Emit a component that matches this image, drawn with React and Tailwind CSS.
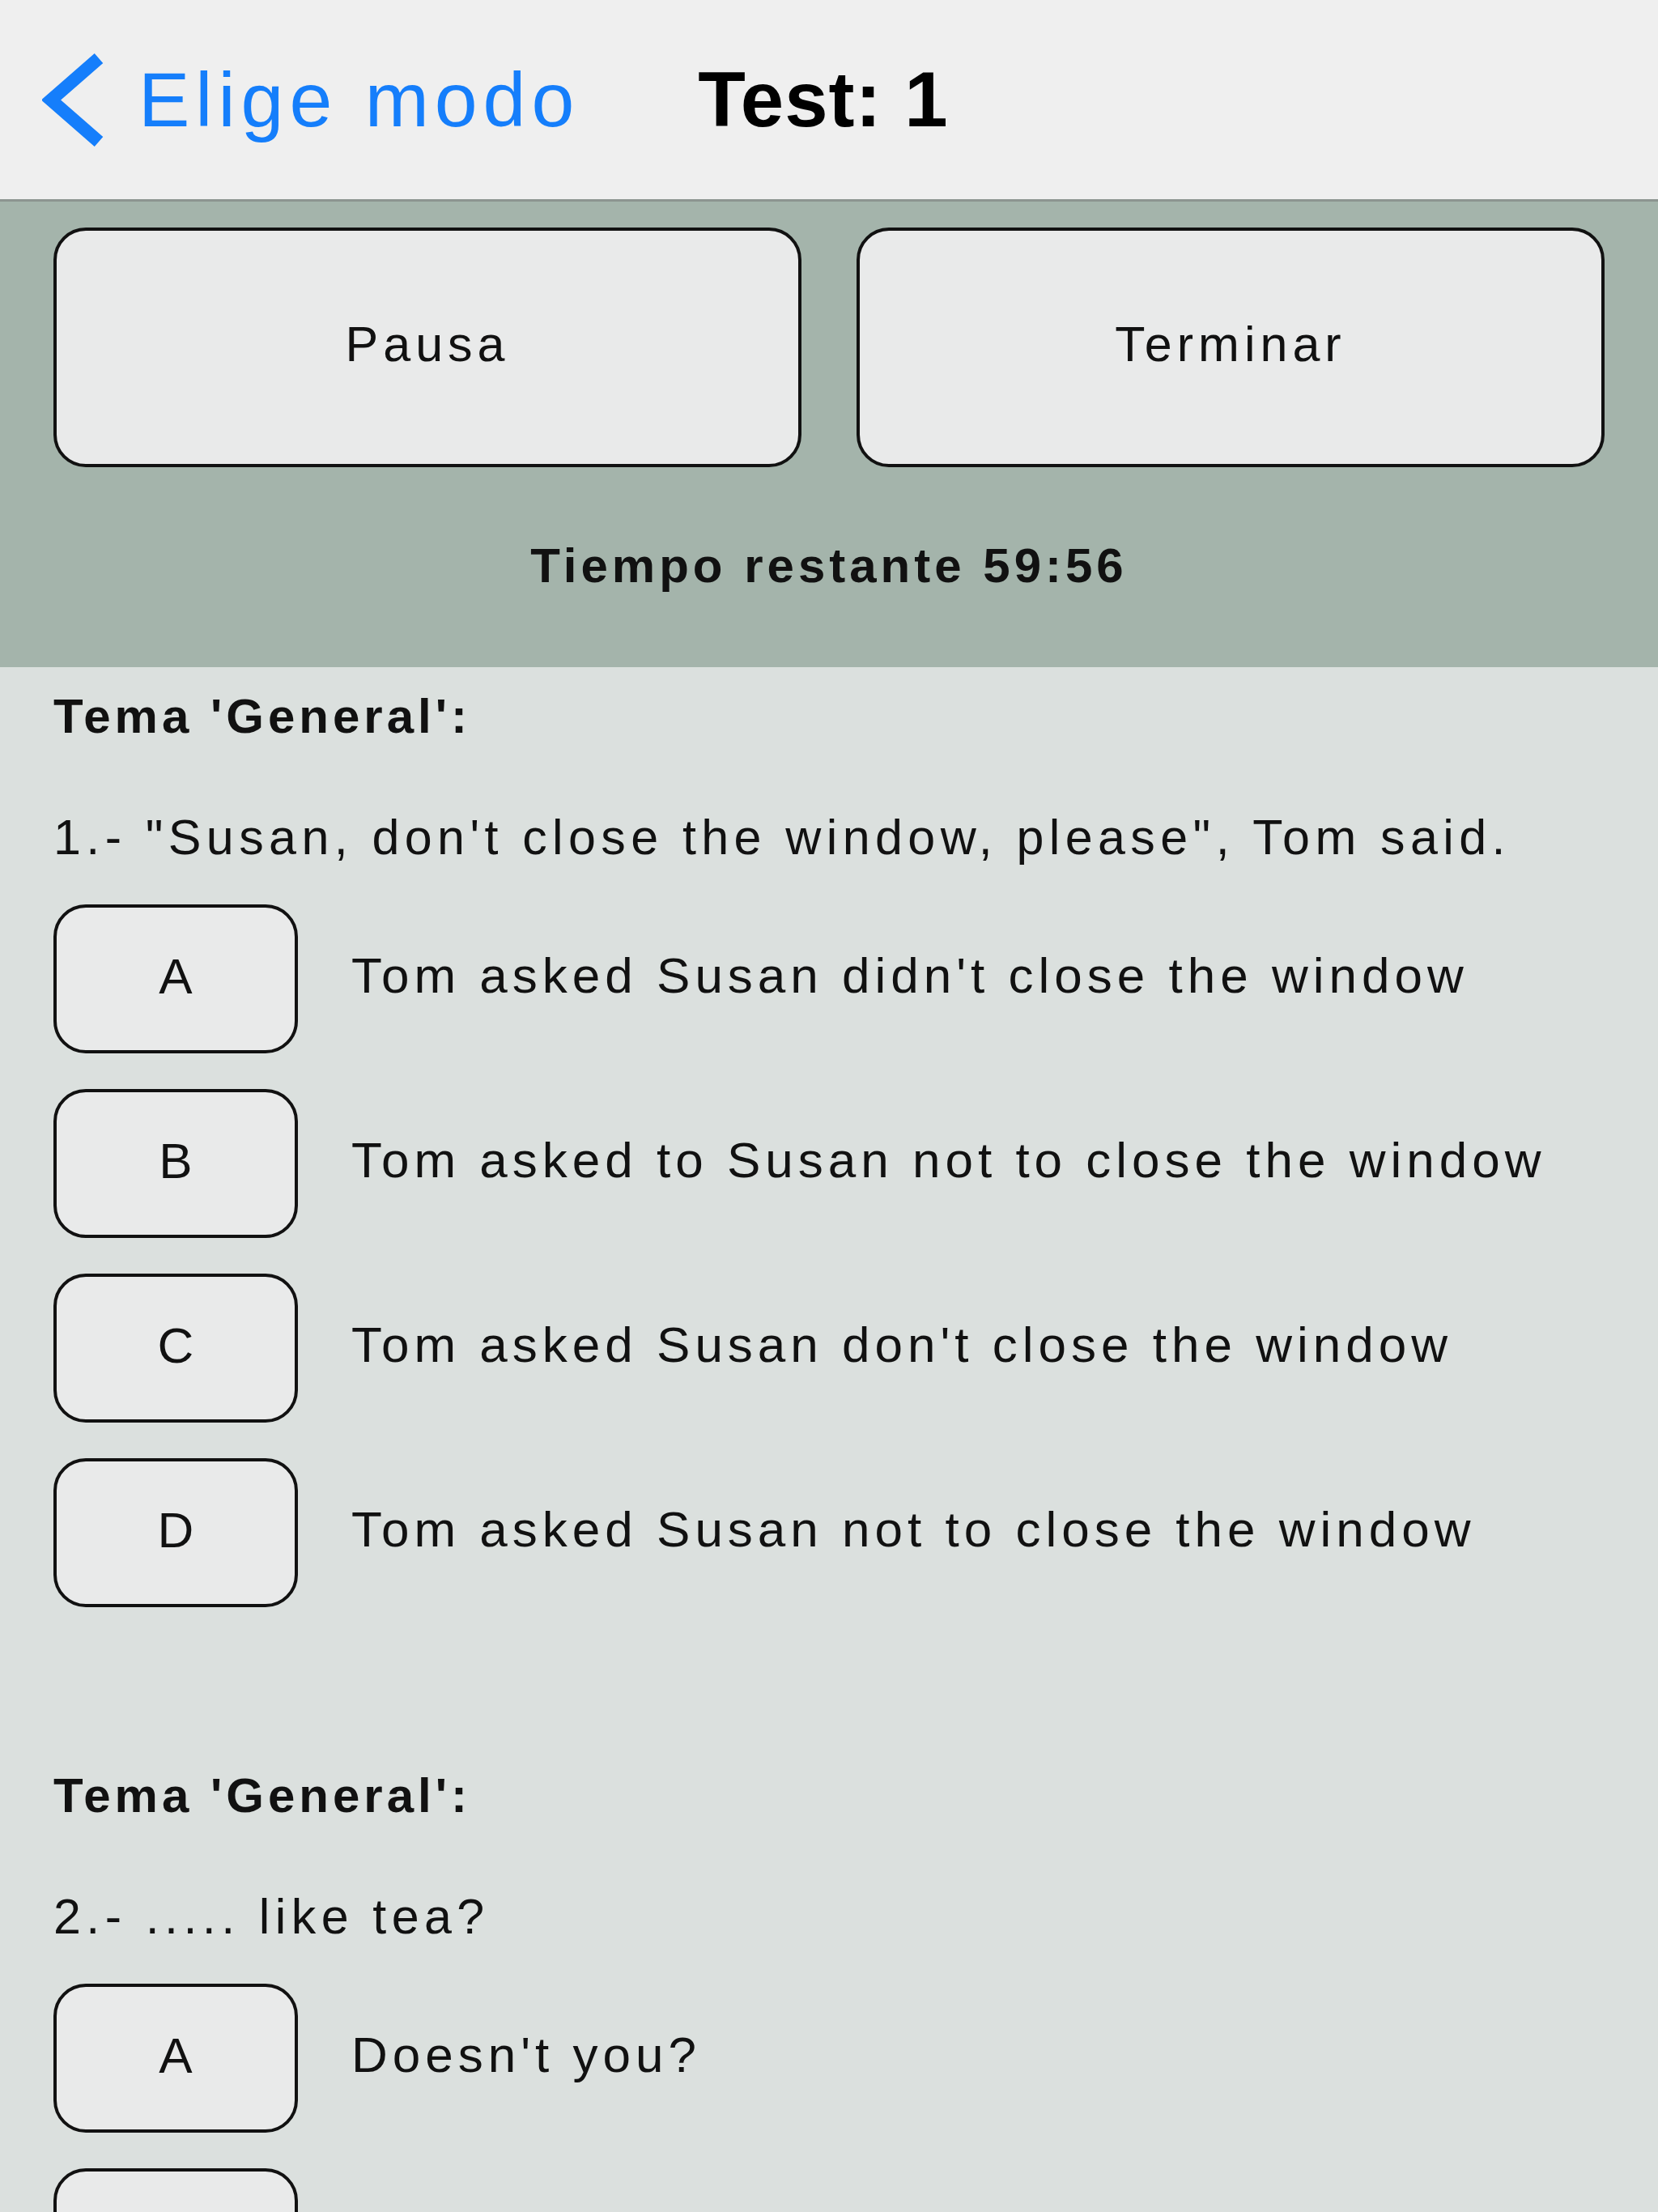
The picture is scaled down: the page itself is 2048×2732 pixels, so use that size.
import React from 'react';

const font = { fontFamily: '"Liberation Sans", Helvetica, Arial, sans-serif' };

const questions = [
  {
    n: 1,
    text: '1.- "Susan, don\'t close the window, please", Tom said.',
    options: [
      ['A', "Tom asked Susan didn't close the window"],
      ['B', 'Tom asked to Susan not to close the window'],
      ['C', "Tom asked Susan don't close the window"],
      ['D', 'Tom asked Susan not to close the window'],
    ],
  },
  {
    n: 2,
    text: '2.- ..... like tea?',
    options: [
      ['A', "Doesn't you?"],
      ['', ''],
    ],
  },
];

const Option = ({ letter, label }) => (
  <div className="flex items-center gap-[66px] h-[184px]">
    <button className="w-[302px] h-[184px] shrink-0 rounded-[40px] border-[4px] border-[#111] bg-[#e9eaea] pb-[6px] text-[62px] leading-none text-[#111]">
      {letter}
    </button>
    {label && (
      <span className="pb-[8px] text-[62px] leading-none tracking-[6px] text-[#111] whitespace-nowrap">
        {label}
      </span>
    )}
  </div>
);

const Question = ({ q, first }) => (
  <div className={first ? 'pt-[31px]' : 'pt-[203px]'}>
    <p className="text-[60px] leading-none font-bold tracking-[5px] text-[#111]">
      Tema 'General':
    </p>
    <p className="mt-[89px] text-[61px] leading-none tracking-[6.4px] text-[#111] whitespace-nowrap">
      {q.text}
    </p>
    <div className="mt-[52px] flex flex-col gap-[44px]">
      {q.options.map(([l, t], i) => (
        <Option key={i} letter={l} label={t} />
      ))}
    </div>
  </div>
);

export default function App() {
  return (
    <div className="w-[2048px] h-[2732px] overflow-hidden bg-[#dbe0de]" style={font}>
      {/* nav bar */}
      <div className="h-[249px] bg-[#efefef] border-b-[3px] border-[#8c9590] flex items-center">
        <svg className="ml-[52px] w-[77px] h-[115px]" viewBox="0 0 77 115">
          <polyline
            points="70,6 11,57.5 70,109"
            fill="none"
            stroke="#157efb"
            strokeWidth="16"
          />
        </svg>
        <span className="ml-[42px] text-[95px] leading-none tracking-[7px] text-[#157efb]">
          Elige modo
        </span>
        <span className="ml-[146px] text-[96px] leading-none font-bold tracking-[1px] text-black">
          Test: 1
        </span>
      </div>

      {/* control panel */}
      <div className="bg-[#a4b4ab] px-[66px] pt-[32px] pb-[95px]">
        <div className="grid grid-cols-2 gap-[68px]">
          <button className="h-[296px] rounded-[40px] border-[4px] border-[#111] bg-[#e9eaea] pb-[8px] text-[61px] leading-none tracking-[6px] text-[#111]">
            Pausa
          </button>
          <button className="h-[296px] rounded-[40px] border-[4px] border-[#111] bg-[#e9eaea] pb-[8px] text-[61px] leading-none tracking-[6px] text-[#111]">
            Terminar
          </button>
        </div>
        <p className="mt-[92px] text-center text-[60px] leading-none font-bold tracking-[5px] text-[#111]">
          Tiempo restante 59:56
        </p>
      </div>

      {/* questions */}
      <div className="px-[66px]">
        {questions.map((q, i) => (
          <Question key={q.n} q={q} first={i === 0} />
        ))}
      </div>
    </div>
  );
}
